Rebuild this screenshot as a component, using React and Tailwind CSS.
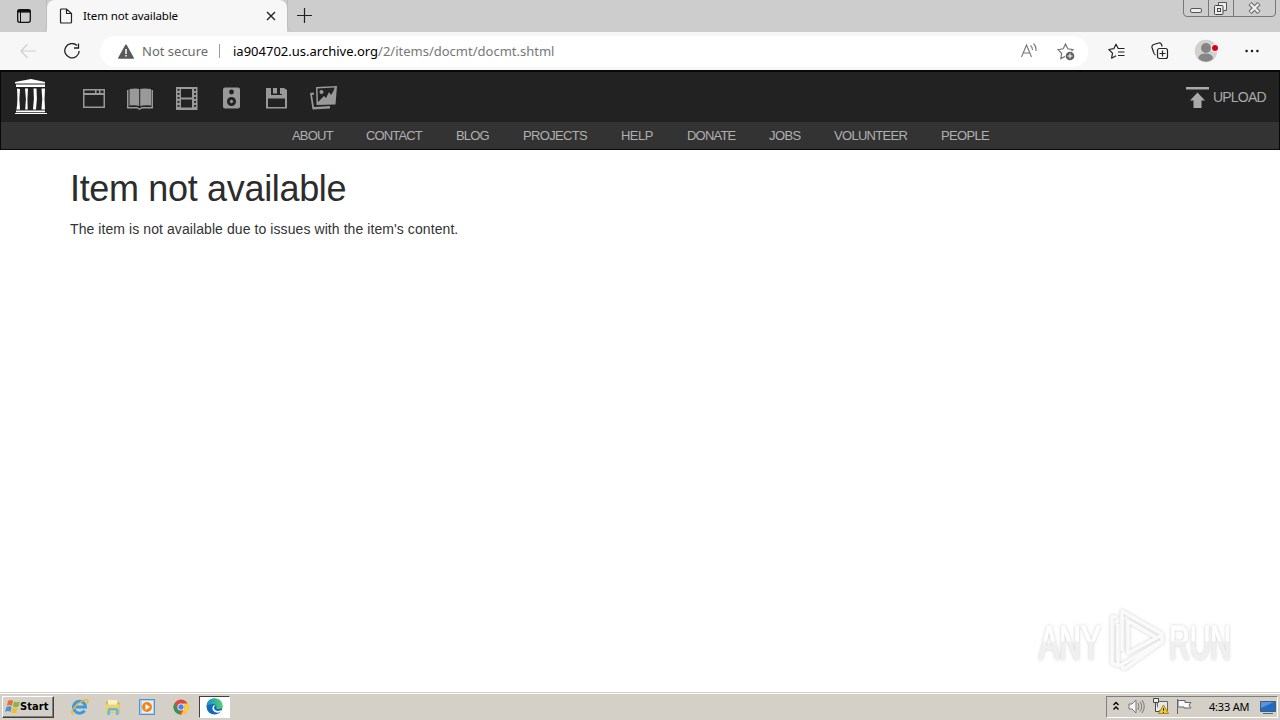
import React from 'react';

const NAV = [
  ['ABOUT', 'w-[74px] tracking-[-0.8px]'],
  ['CONTACT', 'w-[90px] tracking-[-0.85px]'],
  ['BLOG', 'w-[67px] tracking-[-0.8px]'],
  ['PROJECTS', 'w-[98px] tracking-[-0.65px]'],
  ['HELP', 'w-[66px] tracking-[-0.55px]'],
  ['DONATE', 'w-[82px] tracking-[-0.8px]'],
  ['JOBS', 'w-[65px] tracking-[-0.6px]'],
  ['VOLUNTEER', 'w-[107px] tracking-[-0.7px]'],
  ['PEOPLE', 'w-[48px] tracking-[-0.65px]'],
];

function Titlebar() {
  return (
    <div className="flex h-8 bg-[#cdcdcd]">
      <div className="flex w-[47px] items-center justify-center rounded-br-md border-r border-[#bdbdbd]">
        <svg className="ml-px h-8 w-8" viewBox="0 0 32 32" fill="none" stroke="#111">
          <rect x="9.700" y="9.700" width="12.600" height="12.600" rx="2" strokeWidth="1.300" />
          <path d="M9.500 11.200h13" strokeWidth="2.800" />
          <path d="M12.500 12v10" />
        </svg>
      </div>
      <div className="flex w-60 items-center rounded-t-lg bg-[#f7f7f7] pl-3">
        <svg className="h-4 w-[14px]" viewBox="0 0 14 16" fill="none" stroke="#222" strokeWidth="1.2">
          <path d="M2.500 1h5L12.500 5.500V14q0 1-1 1H2.500q-1 0-1-1V2q0-1 1-1M7.500 1v4.500h5" />
        </svg>
        <span className="ml-[10px] w-[180px] whitespace-nowrap text-[11.5px] leading-4 tracking-[-0.12px] text-black">Item not available</span>
        <svg className="ml-[3px] h-[10px] w-[10px]" viewBox="0 0 10 10" stroke="#222" strokeWidth="1.4">
          <path d="m1 1 8 8M9 1 1 9" />
        </svg>
      </div>
      <div className="flex flex-1 rounded-bl-md border-l border-[#bdbdbd] pl-2 pt-[7px]">
        <svg className="h-4 w-4" viewBox="0 0 16 16" stroke="#222" strokeWidth="1.2">
          <path d="M8.500 1v15M1 8.500h15" />
        </svg>
      </div>
      <svg className="h-[18px] w-[97px]" viewBox="0 0 97 18" fill="none" stroke="#777">
        <path d="M.5 0v13q0 3.500 3.500 3.500h85q3.500 0 3.500-3.500V0M25.500 0v16M50.500 0v16" />
        <rect x="7.500" y="8.500" width="11" height="4" rx="1.500" fill="#eee" stroke="#555" />
        <path d="M35.500 5.500v-3h8v8h-3" fill="#eee" stroke="#555" />
        <rect x="31.500" y="5.500" width="8.500" height="9" rx="1" fill="#eee" stroke="#444" />
        <rect x="34.500" y="8.500" width="3" height="3" stroke="#444" />
        <path d="m67 3.500 9 9m0-9-9 9" stroke="#666" strokeWidth="4.400" />
        <path d="m67.500 4 8 8m0-8-8 8" stroke="#efefef" strokeWidth="2.400" />
      </svg>
    </div>
  );
}

function Toolbar() {
  return (
    <div className="flex h-[38px] items-center bg-[#f7f7f7]">
      <svg className="ml-5 h-4 w-4" viewBox="0 0 16 16" fill="none" stroke="#cfcfcf" strokeWidth="1.2">
        <path d="M16 8H1M7.500 1 1 8l6.500 7" />
      </svg>
      <svg className="ml-7 h-4 w-4" viewBox="0 0 16 16" fill="none" stroke="#222" strokeWidth="1.3">
        <path d="M13 2.500A7.200 7.200 0 1 0 15.200 8M14.500.500v4.500H10" />
      </svg>
      <div className="ml-5 flex h-[31px] w-[988px] items-center rounded-full bg-white pl-[18px]">
        <svg className="h-[15px] w-4" viewBox="0 0 16 15">
          <path d="M8 1.200 15.200 14H.8z" fill="#595959" stroke="#595959" strokeWidth="1.500" strokeLinejoin="round" />
          <path d="M8 5v5M8 11v1.600" stroke="#fff" strokeWidth="1.500" />
        </svg>
        <span className="ml-2 w-[68px] whitespace-nowrap text-[13px] leading-5 text-[#6b6b6b]">Not secure</span>
        <div className="ml-[9px] h-[14px] w-px bg-[#999]" />
        <div className="ml-[13px] w-[788px] whitespace-nowrap text-[13px] leading-5 text-[#777]">
          <span className="text-black">ia904702.us.archive.org</span>/2/items/docmt/docmt.shtml
        </div>
        <svg className="h-4 w-4" viewBox="0 0 16 16" fill="none" stroke="#777" strokeWidth="1.100">
          <path d="M.5 14 5.500 2 10.500 14M2.200 10h6.600M9.500 2.500q2 1.500 2 4.500M12.500.500Q15.500 3 15 8" />
        </svg>
        <svg className="ml-5 mt-px h-[18px] w-[18px]" viewBox="0 0 18 18">
          <path d="m8.500 1 2.300 4.800 5.200.8-3.700 3.700.9 5.300-4.700-2.500-4.700 2.500.9-5.300L1 6.600l5.200-.8z" fill="none" stroke="#777" strokeWidth="1.200" />
          <circle cx="13" cy="13" r="5" fill="#fff" />
          <circle cx="13" cy="13" r="4.300" fill="#606060" />
          <path d="M13 10.500v5M10.500 13h5" stroke="#fff" />
        </svg>
      </div>
      <svg className="ml-5 h-[17px] w-[17px]" viewBox="0 0 17 17" fill="none" stroke="#222" strokeWidth="1.200" strokeLinejoin="round">
        <path d="M10.200 5.500 8 1.200 5.800 5.700.800 6.500l3.700 3.600-.9 5.100 4.500-2.400M10 5.500h6.500M10 9h6.500M10 12.500h6.500" />
      </svg>
      <svg className="ml-[26px] h-[18px] w-[18px]" viewBox="0 0 18 18" fill="none" stroke="#222" strokeWidth="1.200">
        <rect x="6.500" y="6.500" width="10" height="10" rx="2" />
        <path d="M11.500 8.500v6M8.500 11.500h6M4.500 13Q3 12.500 2.500 10L1 5.500Q.5 3.200 2.700 2.500l5-1.500q2-.5 2.800 1.500l.7 2" />
      </svg>
      <svg className="ml-[25px] h-6 w-6" viewBox="0 0 24 24">
        <circle cx="12" cy="12" r="11.200" fill="#d3d1ce" />
        <circle cx="12" cy="9" r="5" fill="#858585" />
        <path d="M4.500 20q-.5-5.500 7-5.500t7.500 5.500q-7 5.500-14.500 0" fill="#858585" />
        <circle cx="21" cy="9" r="4" fill="#f7f7f7" />
        <circle cx="21" cy="9" r="3" fill="#e00012" />
      </svg>
      <svg className="ml-[27px] h-4 w-[14px]" viewBox="0 0 14 16" fill="#111">
        <circle cx="1.600" cy="8" r="1.200" /><circle cx="7" cy="8" r="1.200" /><circle cx="12.400" cy="8" r="1.200" />
      </svg>
    </div>
  );
}

function MediaIcons() {
  return (
    <svg className="h-[50px] w-[350px]" viewBox="0 0 350 50">
      <g fill="#fff">
        <path d="M15 11.500V10L31 7l14 3v1.500zM16 12.500h29V15H16zM16 38.500h29v1.700H16zM15 41h32v1H15z" />
        <path d="m17 16.500 3 .5q-1.200 9 0 20.500h-3.500q1.500-9 .5-21m8 0h3q-1 11-.3 21h-2.500q1.500-11-.2-21m8.500 0h3q1 11-.5 21h-3q1.500-11 .5-21m8 0h3.500q-1 11 0 21h-3.500q1.500-11 0-21" />
      </g>
      <g fill="#999" transform="translate(0 -1)">
        <path fillRule="evenodd" d="M83 18h22v19H83zm1.500 1.500v2.500H95v-2.500zm12 0v2.500H99v-2.500zm4 0v2.500h3v-2.500zM84.500 24v11.500h19V24z" />
        <path d="M127 19h1.500v17h9l2 1.500 2-1.500h10V19h1.500v18.500h-11l-2.500 1.500-2.500-1.500h-10zM129.500 18q7-1 9.700 0V35q-3-1-9.700-.5zm10.700 0q3-1 10.800 0v16.500q-7-.5-10.800.5z" />
        <path fillRule="evenodd" d="M176 16h21.500v23H176zm5 2v8.500h11V18zm0 10.500v8h11v-8zM177.500 18v1.800h2V18zm0 4v1.800h2V22zm0 4v1.800h2V26zm0 4v1.800h2V30zm0 4v1.800h2V34zm16.500-16v1.800h2V18zm0 4v1.800h2V22zm0 4v1.800h2V26zm0 4v1.800h2V30zm0 4v1.800h2V34z" />
        <rect x="223" y="16.500" width="17" height="21" rx="2" />
        <path fillRule="evenodd" d="M266 17h18l3 2v18.500h-21zm5 0v7h11v-7zm-3 10.500V36h17v-8.500z" />
        <path d="M273 17h4v5.500h-4zM280 17h2v6h-2z" />
        <path d="m310 22 4-.5v2l-2 .5 2 12 16-1v2.500l-17.500 1z" />
        <path fillRule="evenodd" d="m316 16 21-1-1.500 18.500-19 .5zm1.500 1.500L318 31l3-3 3-3 2 2 3-6 2 3 3-5 .5-2.500z" />
        <circle cx="321.500" cy="21" r="2" />
      </g>
      <g fill="#222">
        <circle cx="231.500" cy="20" r="2.400" /><circle cx="231.500" cy="29.500" r="4.500" />
      </g>
      <path d="M231.500 27.500 233.500 29.500l-2 2-2-2z" fill="#999" />
    </svg>
  );
}

function ArchiveNav() {
  return (
    <header className="h-20 border border-t-2 border-[#080808] bg-[#222] font-['Liberation_Sans',Arial,sans-serif]">
      <div className="flex h-[50px] items-center justify-between">
        <div className="-ml-px"><MediaIcons /></div>
        <div className="flex w-[93px] items-center">
          <svg className="mt-px h-[22px] w-[23px]" viewBox="0 0 23 22" fill="#aaa"><path d="M0 0h23v2.500H0zM11.500 5.500l7.500 8h-3.500V21h-8v-7.500H4z" /></svg>
          <span className="ml-1 whitespace-nowrap text-[14px] leading-5 tracking-[-0.8px] text-[#aaa]">UPLOAD</span>
        </div>
      </div>
      <nav className="flex h-[27px] items-center bg-[#333] pl-[291px] text-[13px] leading-5 text-[#b0b0b0]">
        {NAV.map(([t, c]) => <a key={t} className={'shrink-0 whitespace-nowrap ' + c}>{t}</a>)}
      </nav>
    </header>
  );
}

function Watermark() {
  return (
    <svg className="absolute left-[1025px] top-[455px] h-[80px] w-[230px] overflow-visible" viewBox="0 0 230 80">
      <defs>
        <linearGradient id="shade" gradientUnits="userSpaceOnUse" x1="0" y1="18" x2="0" y2="54">
          <stop offset="50%" stopColor="#fff" /><stop offset="52%" stopColor="#f0f0f0" />
        </linearGradient>
        <filter id="halo" x="-10%" y="-20%" width="120%" height="140%">
          <feDropShadow dx="0" dy="0" stdDeviation="1.800" floodColor="#777" floodOpacity=".4" />
        </filter>
      </defs>
      <g filter="url(#halo)" fontFamily="Liberation Sans, Arial, sans-serif" fontSize="49" fill="url(#shade)" stroke="url(#shade)" strokeWidth="1.200">
        <text x="14" y="54" textLength="62" lengthAdjust="spacingAndGlyphs">ANY</text>
        <text x="144" y="54" textLength="62" lengthAdjust="spacingAndGlyphs">RUN</text>
        <g fill="none" stroke="#fafafa" strokeWidth="3.400" strokeLinejoin="round">
          <path d="M92 12h-5v46l6 3V19M97 46V6l40 23-5 4-29-17v32l34-18v7L99 64l-3-4 39-23" />
        </g>
      </g>
    </svg>
  );
}

function Taskbar() {
  return (
    <footer className="flex h-7 items-center border-t border-[#d4d0c8] bg-[#d4d0c8] shadow-[inset_0_1px_0_white]">
      <div className="mt-px flex h-[22px] w-[52px] items-center border border-b-[#404040] border-l-white border-r-[#404040] border-t-white pl-px ml-0.5 shadow-[inset_-1px_-1px_0_#808080]">
        <svg className="h-4 w-4 shrink-0" viewBox="0 0 16 16">
          <path d="M4 2q3-2 5 0L8 7Q5 5 3 7z" fill="#ed6c30" /><path d="M10 2.500q3 1.500 6 0l-1.500 5q-3 1.500-5.500 0z" fill="#82b744" />
          <path d="M2.500 8q3-1.500 5 0l-1 5Q4 11 1 13z" fill="#4b91d0" /><path d="M8.500 8.500q3 1.500 5.500 0l-1.500 5q-3 1.500-5 0z" fill="#edbf32" />
        </svg>
        <span className="whitespace-nowrap text-[11px] font-bold leading-4 tracking-[0.1px] text-black font-['DejaVu_Sans_Condensed','DejaVu_Sans',sans-serif]">Start</span>
      </div>
      <svg className="ml-4 h-[18px] w-5" viewBox="0 0 20 18" fill="none">
        <path d="M14.500 12.500A6 6 0 1 1 15.500 9H5.500" stroke="#3c9bdc" strokeWidth="3" />
        <path d="M4 16q-4 0-1-5C7 5 17-.5 18 2.500q.5 1-1 3" stroke="#edb832" strokeWidth="1.400" />
      </svg>
      <svg className="ml-[14px] h-[18px] w-[18px]" viewBox="0 0 18 18">
        <path d="M2 3h6l1 1.500h7V15H2z" fill="#dfb94e" /><path d="M4 2h9v6H4z" fill="#f7f2c1" /><path d="M1.500 6.500h14v8h-14z" fill="#efd373" />
        <path d="M3.500 17v-5q0-2 2-2h7q2 0 2 2v5H12v-4.500H6V17z" fill="#65b9dc" />
      </svg>
      <svg className="ml-[17px] h-4 w-4" viewBox="0 0 16 16">
        <rect x=".5" y=".5" width="15" height="15" fill="#acd0ef" stroke="#5794c4" /><rect x="3" y="2" width="11" height="12" fill="#e7eef4" />
        <circle cx="8" cy="8" r="5" fill="#f18515" /><path d="m6.500 5 4.500 3-4.500 3z" fill="#fff" />
      </svg>
      <svg className="ml-[18px] h-4 w-4" viewBox="0 0 16 16">
        <circle cx="8" cy="8" r="7.500" fill="#db4b3d" /><path d="M1.500 4.300 6 12l2 3.500A7.500 7.500 0 0 1 1.500 4.300" fill="#289d58" />
        <path d="M8 15.500 12 8 10 4.500h5A7.500 7.500 0 0 1 8 15.500" fill="#ffcb35" />
        <circle cx="8" cy="8" r="3.500" fill="#fff" /><circle cx="8" cy="8" r="2.700" fill="#4285f4" />
      </svg>
      <div className="ml-2.5 flex h-[22px] w-[31px] items-center justify-center border border-b-white border-l-[#404040] border-r-white border-t-[#404040] bg-white">
        <svg className="h-[17px] w-[17px]" viewBox="0 0 17 17">
          <defs><linearGradient id="edge" x1="0" y1="0" x2="1" y2="0"><stop stopColor="#168fd3" /><stop offset="1" stopColor="#50d568" /></linearGradient></defs>
          <circle cx="8.500" cy="8.500" r="8" fill="#1169bc" />
          <path d="M.5 8C1 2 5 .500 8.500.500q8 0 8 7.500 0 3-4 3-3 0-2-2 0-3-3.500-3T.5 8" fill="url(#edge)" />
          <path d="M10 7q-3 1.500-1.500 4.500 2 2.500 7 .5l-1 2q-4 1.500-6.500-.5-3-3-.5-6z" fill="#fff" />
        </svg>
      </div>
      <div className="ml-auto mr-0.5 flex h-[22px] w-[172px] items-center border border-b-white border-l-[#808080] border-r-white border-t-[#808080]">
        <svg className="-mt-0.5 ml-[5px] h-3 w-2" viewBox="0 0 8 12" fill="none" stroke="#000" strokeWidth="1.400"><path d="m1.500 5 2.500-2.500L6.500 5M1.500 9.500 4 7l2.500 2.500" /></svg>
        <svg className="ml-2 h-[17px] w-[17px]" viewBox="0 0 17 17" fill="#f5f5f5" stroke="#777">
          <path d="M1 6h3l4-4v13l-4-4H1z" /><path d="M10 5q2 3 0 7M12 3.500q3.500 5 0 10M14 2q4.500 6.500 0 13" fill="none" />
        </svg>
        <svg className="ml-[7px] h-[17px] w-[17px]" viewBox="0 0 17 17">
          <path d="M5.500 3.500h10v9h-10z" fill="#e6e6e6" stroke="#666" /><path d="M1.500.500h5v4h-5zM3.500 5v8.500h4" fill="#eee" stroke="#444" />
          <path d="m11.500 7 5 8.500h-10z" fill="#f4cb25" stroke="#a68b23" /><path d="M11.500 10v3M11.500 14v1" stroke="#333" />
        </svg>
        <svg className="ml-[7px] h-[17px] w-4" viewBox="0 0 16 17" fill="#f8f8f8" stroke="#666"><path d="M1.500 1v15M2 2.500h7v2h6l-2 2.500 2 3H8V9H2z" /></svg>
        <span className="ml-[17px] w-[42px] whitespace-nowrap text-[11px] leading-4 tracking-[-0.2px] text-black">4:33 AM</span>
        <svg className="ml-[9px] h-4 w-4 shrink-0" viewBox="0 0 16 16"><path d="M.5 2.500h15v10H.5z" fill="#226bc1" stroke="#455b78" /><path d="M1 3h13L1 9z" fill="#5497df" /><path d="M3 14.500h10" stroke="#536a83" /></svg>
      </div>
    </footer>
  );
}

export default function App() {
  return (
    <div className="flex h-[720px] w-[1280px] flex-col overflow-hidden bg-white font-['Noto_Sans',sans-serif]">
      <Titlebar />
      <Toolbar />
      <ArchiveNav />
      <main className="relative flex-1 pl-[70px] pt-[19px] font-['Liberation_Sans',Arial,sans-serif]">
        <h1 className="text-[36px] leading-10 tracking-[-0.33px] text-[#2c2c2c]">Item not available</h1>
        <p className="mt-[10px] text-[14px] leading-5 tracking-[0.08px] text-[#333]">The item is not available due to issues with the item's content.</p>
        <Watermark />
      </main>
      <Taskbar />
    </div>
  );
}
